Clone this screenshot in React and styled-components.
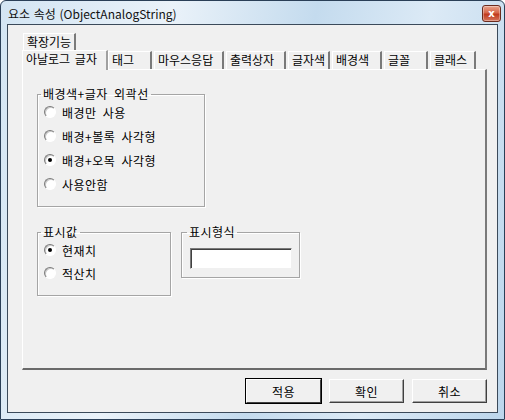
import React from 'react';
import styled, { createGlobalStyle } from 'styled-components';

const GlobalStyle = createGlobalStyle`
  html, body {
    margin: 0;
    padding: 0;
    background: #ffffff;
  }
  body {
    font-family: "Noto Sans CJK KR", "Liberation Sans", sans-serif;
    font-size: 12px;
    color: #000;
  }
`;

const Window = styled.div`
  width: 505px;
  height: 420px;
  box-sizing: border-box;
  display: flex;
  flex-direction: column;
  border: 1px solid #2a3f57;
  border-radius: 6px 6px 0 0;
  background: linear-gradient(100deg, #d3e5f3 0%, #eaf2f9 30%, #c4dbee 55%, #dceaf6 75%, #bcd6ec 100%);
  padding: 0 6px 6px 6px;
  overflow: hidden;
`;

const TitleBar = styled.div`
  height: 23px;
  display: flex;
  align-items: center;
  justify-content: space-between;
`;

const Title = styled.span`
  font-size: 12px;
  color: #111;
  padding-left: 1px;
  margin-top: 1px;
  word-spacing: 1px;
`;

const CloseButton = styled.div`
  width: 17px;
  height: 15px;
  margin-right: -3px;
  margin-top: 2px;
  border: 1px solid #6b2b1e;
  border-radius: 3px;
  background: linear-gradient(#e8a48c 0%, #d6664a 45%, #c0391d 55%, #d5745a 100%);
  display: flex;
  align-items: center;
  justify-content: center;
  color: #fff;
  font-family: "DejaVu Sans", sans-serif;
  font-weight: bold;
  font-size: 10px;
  line-height: 1;
  box-shadow: inset 0 0 0 1px rgba(255, 255, 255, 0.35);
`;

const Client = styled.div`
  flex: 1;
  border: 1px solid #3b4a5a;
  background: #f0f0f0;
  display: flex;
  flex-direction: column;
  padding: 10px 10px 9px 14px;
`;

const TabArea = styled.div`
  display: flex;
  flex-direction: column;
`;

const TabRow = styled.div`
  display: flex;
  align-items: flex-end;
  padding-left: ${p => p.$indent || 0}px;
  height: ${p => p.$height}px;
`;

const Tab = styled.div`
  box-sizing: border-box;
  width: ${p => p.$width}px;
  height: ${p => (p.$active ? 20 : 18)}px;
  margin-right: ${p => (p.$active ? 0 : 2)}px;
  border-top: 1px solid #ffffff;
  border-left: 1px solid #ffffff;
  border-right: 2px solid ${p => (p.$active ? '#a0a0a0' : '#7a7a7a')};
  background: #f0f0f0;
  padding-left: 3px;
  line-height: 16px;
  white-space: nowrap;
  word-spacing: 2px;
  position: relative;
  z-index: ${p => (p.$active ? 2 : 1)};
  margin-bottom: ${p => (p.$active ? -1 : 0)}px;
`;

const Panel = styled.div`
  flex: 1;
  box-sizing: border-box;
  border-top: 1px solid #ffffff;
  border-left: 1px solid #ffffff;
  border-right: 2px solid #7a7a7a;
  border-bottom: 2px solid #6a6a6a;
  display: flex;
  flex-direction: column;
  align-items: flex-start;
  padding: 17px 0 0 14px;
`;

const Group = styled.fieldset`
  box-sizing: border-box;
  width: ${p => p.$width}px;
  height: ${p => p.$height}px;
  margin: 0;
  padding: ${p => p.$padTop}px 0 0 ${p => p.$padLeft}px;
  border: 1px solid #a5a5a5;
  box-shadow: 1px 1px 0 #ffffff, inset 1px 1px 0 #ffffff;
  border-radius: 0;
  display: flex;
  flex-direction: column;
  gap: ${p => p.$gap || 0}px;
  letter-spacing: 0.5px;
  word-spacing: 3px;
`;

const Legend = styled.legend`
  padding: 0 2px;
  margin-left: ${p => p.$shift}px;
  line-height: 14px;
`;

const OptionRow = styled.label`
  display: flex;
  align-items: center;
  gap: 6px;
  height: 16px;
`;

const Radio = styled.span`
  box-sizing: border-box;
  flex: none;
  width: 12px;
  height: 12px;
  border-radius: 50%;
  border: 1px solid;
  border-color: #7a7a7a #ffffff #ffffff #7a7a7a;
  background: #ffffff;
  display: flex;
  align-items: center;
  justify-content: center;
  box-shadow: inset 1px 1px 0 #c8c8c8;

  &::after {
    content: '';
    width: 4px;
    height: 4px;
    border-radius: 50%;
    background: ${p => (p.$checked ? '#000' : 'transparent')};
  }
`;

const LowerRow = styled.div`
  display: flex;
  align-items: flex-start;
  gap: 10px;
  margin-top: 18px;
`;

const TextBox = styled.div`
  box-sizing: border-box;
  width: 102px;
  height: 21px;
  margin-top: 9px;
  background: #ffffff;
  border: 1px solid;
  border-color: #7a7a7a #f0f0f0 #f0f0f0 #7a7a7a;
  box-shadow: inset 1px 1px 0 #404040;
`;

const ButtonBar = styled.div`
  display: flex;
  justify-content: flex-end;
  gap: 8px;
  margin-top: 9px;
`;

const Button = styled.div`
  box-sizing: border-box;
  width: 75px;
  height: 24px;
  display: flex;
  align-items: center;
  justify-content: center;
  background: #f0f0f0;
  border: 1px solid;
  border-color: #ffffff #404040 #404040 #ffffff;
  box-shadow: ${p => (p.$default ? '0 0 0 1px #000' : 'inset -1px -1px 0 #a0a0a0')};
  letter-spacing: 0.5px;
`;

const tabsBack = [{ label: '확장기능', width: 53 }];
const tabsFront = [
  { label: '아날로그 글자', width: 86, active: true },
  { label: '태그', width: 44 },
  { label: '마우스응답', width: 70 },
  { label: '출력상자', width: 60 },
  { label: '글자색', width: 42 },
  { label: '배경색', width: 50 },
  { label: '글꼴', width: 44 },
  { label: '클래스', width: 46 },
];

const outlineOptions = [
  { label: '배경만 사용' },
  { label: '배경+볼록 사각형' },
  { label: '배경+오목 사각형', checked: true },
  { label: '사용안함' },
];

const valueOptions = [
  { label: '현재치', checked: true },
  { label: '적산치' },
];

export default function App() {
  return (
    <>
      <GlobalStyle />
      <Window>
        <TitleBar>
          <Title>요소 속성 (ObjectAnalogString)</Title>
          <CloseButton>x</CloseButton>
        </TitleBar>
        <Client>
          <TabArea>
            <TabRow $indent={1} $height={16}>
              {tabsBack.map(t => (
                <Tab key={t.label} $width={t.width}>{t.label}</Tab>
              ))}
            </TabRow>
            <TabRow $height={18}>
              {tabsFront.map(t => (
                <Tab key={t.label} $width={t.width} $active={t.active}>{t.label}</Tab>
              ))}
            </TabRow>
          </TabArea>
          <Panel>
            <Group $width={168} $height={120} $gap={8} $padTop={3} $padLeft={6}>
              <Legend $shift={-3}>배경색+글자 외곽선</Legend>
              {outlineOptions.map(o => (
                <OptionRow key={o.label}>
                  <Radio $checked={o.checked} />
                  {o.label}
                </OptionRow>
              ))}
            </Group>
            <LowerRow>
              <Group $width={134} $height={71} $gap={7} $padTop={3} $padLeft={6}>
                <Legend $shift={-3}>표시값</Legend>
                {valueOptions.map(o => (
                  <OptionRow key={o.label}>
                    <Radio $checked={o.checked} />
                    {o.label}
                  </OptionRow>
                ))}
              </Group>
              <Group $width={119} $height={53} $padTop={0} $padLeft={8}>
                <Legend $shift={-3}>표시형식</Legend>
                <TextBox />
              </Group>
            </LowerRow>
          </Panel>
          <ButtonBar>
            <Button $default>적용</Button>
            <Button>확인</Button>
            <Button>취소</Button>
          </ButtonBar>
        </Client>
      </Window>
    </>
  );
}
